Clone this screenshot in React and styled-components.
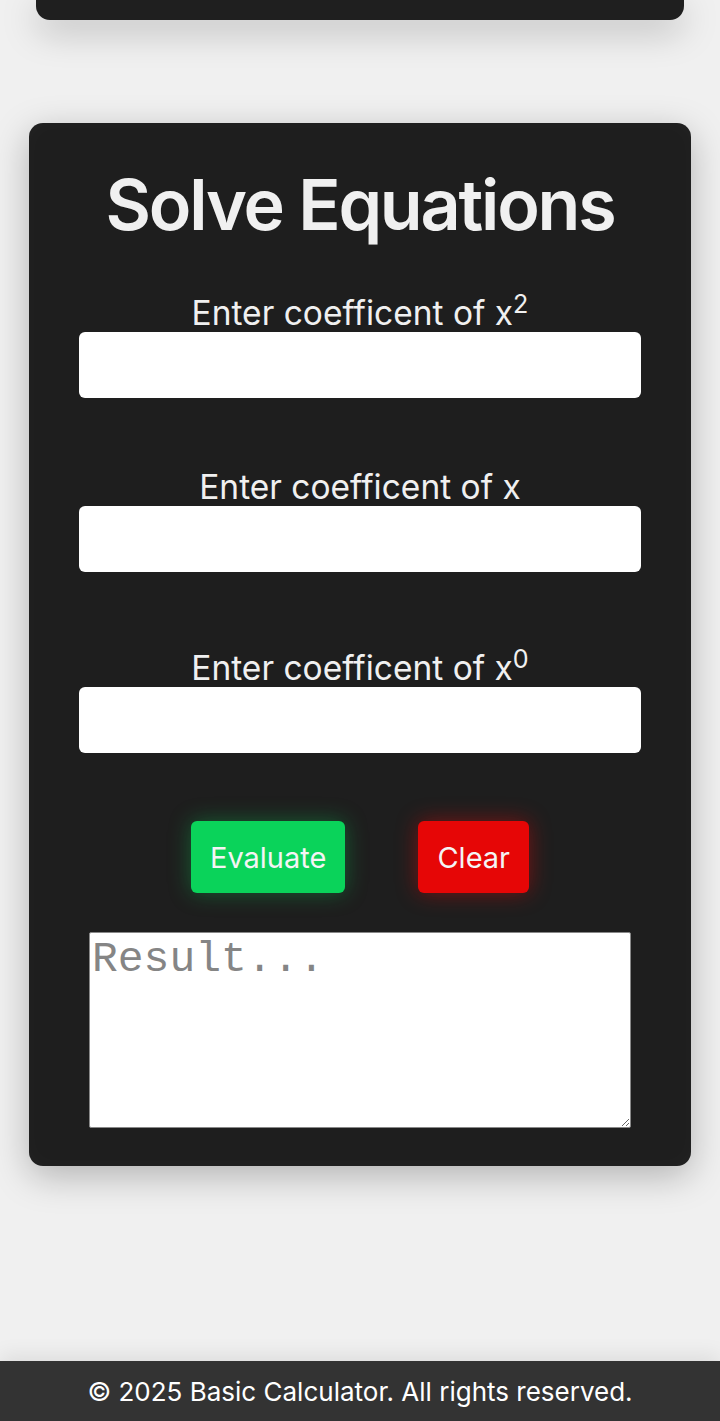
import React from "react";
import styled, { createGlobalStyle } from "styled-components";

const Global = createGlobalStyle`
  html, body { margin: 0; padding: 0; }
  body {
    background: #f0f0f0;
    font-family: Inter, "Noto Sans", sans-serif;
    color: #f0f0f0;
  }
`;

const Page = styled.div`
  min-height: 1421px;
  display: flex;
  flex-direction: column;
  align-items: center;
`;

const TopCard = styled.div`
  width: 648px;
  height: 20px;
  background: #1f1f1f;
  border-radius: 0 0 14px 14px;
  box-shadow: 0 10px 36px rgba(0, 0, 0, 0.26);
`;

const Card = styled.section`
  box-sizing: border-box;
  width: 662px;
  margin-top: 103px;
  padding: 40px 50px 38px;
  background: #1e1e1e;
  border-radius: 14px;
  box-shadow: 0 10px 36px rgba(0, 0, 0, 0.26), inset 0 0 24px rgba(255, 255, 255, 0.025);
  display: flex;
  flex-direction: column;
  align-items: center;
`;

const Title = styled.h1`
  margin: 0;
  font-size: 70px;
  line-height: 84px;
  font-weight: 600;
  letter-spacing: -2.2px;
  color: #f0f0f0;
`;

const Field = styled.div`
  width: 100%;
  display: flex;
  flex-direction: column;
  align-items: center;
  margin-top: ${(p) => p.$mt}px;
`;

const Label = styled.label`
  font-size: 33.5px;
  line-height: 37px;
  color: #f0f0f0;
  sup { font-size: 0.75em; line-height: 0; }
`;

const Input = styled.input`
  box-sizing: border-box;
  width: 100%;
  height: 66px;
  border: none;
  border-radius: 6px;
  background: #fff;
  font-size: 24px;
  outline: none;
`;

const Buttons = styled.div`
  display: flex;
  justify-content: center;
  gap: 73px;
  margin-top: 68px;
`;

const Button = styled.button`
  height: 72px;
  padding: 0 19px;
  border: none;
  border-radius: 6px;
  font-family: Inter, sans-serif;
  font-size: 29px;
  color: #f4f4f4;
  background: ${(p) => p.$bg};
  box-shadow: 0 0 22px ${(p) => p.$glow};
`;

const Result = styled.textarea`
  box-sizing: border-box;
  width: 542px;
  height: 196px;
  margin-top: 39px;
  border: 1px solid #888;
  border-radius: 2px;
  background: #fff;
  padding: 2px;
  font-family: "Courier New", "Liberation Mono", monospace;
  font-size: 43px;
  line-height: 1.15;
  &::placeholder { color: #858585; }
`;

const Spacer = styled.div`
  flex: 1;
`;

const Footer = styled.footer`
  width: 100%;
  height: 60px;
  background: #333;
  color: #fff;
  display: flex;
  align-items: center;
  justify-content: center;
  font-size: 26px;
  box-shadow: 0 -6px 20px rgba(0, 0, 0, 0.08);
`;

export default function App() {
  return (
    <>
      <Global />
      <Page>
        <TopCard />
        <Card>
          <Title>Solve Equations</Title>
          <Field $mt={48}>
            <Label>Enter coefficent of x<sup>2</sup></Label>
            <Input type="text" />
          </Field>
          <Field $mt={71}>
            <Label>Enter coefficent of x</Label>
            <Input type="text" />
          </Field>
          <Field $mt={78}>
            <Label>Enter coefficent of x<sup>0</sup></Label>
            <Input type="text" />
          </Field>
          <Buttons>
            <Button $bg="#0ad35a" $glow="rgba(10,211,90,0.35)">Evaluate</Button>
            <Button $bg="#e60606" $glow="rgba(230,6,6,0.45)">Clear</Button>
          </Buttons>
          <Result placeholder="Result..." />
        </Card>
        <Spacer />
        <Footer>© 2025 Basic Calculator. All rights reserved.</Footer>
      </Page>
    </>
  );
}
